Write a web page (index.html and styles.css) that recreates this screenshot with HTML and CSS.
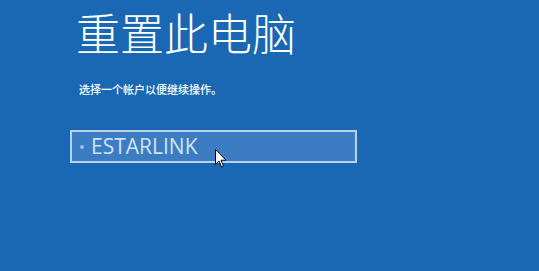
FILE: index.html
```html
<!DOCTYPE html>
<html lang="zh-CN">
<head>
<meta charset="utf-8">
<title>重置此电脑</title>
<link rel="stylesheet" href="styles.css">
</head>
<body>
<main class="screen">
  <h1 class="title">重置此电脑</h1>
  <p class="subtitle">选择一个帐户以便继续操作。</p>
  <div class="account">
    <span class="dot"></span>
    <span class="name">ESTARLINK</span>
    <svg class="cursor" width="12" height="19" viewBox="0 0 12 19">
      <path d="M0.5 0.5 L0.5 15.5 L4 12 L6.5 18 L8.5 17 L6 11.2 L11 11.2 Z" fill="#fff" stroke="#000" stroke-width="1"/>
    </svg>
  </div>
</main>
</body>
</html>
```
FILE: styles.css
```css
html, body {
  margin: 0;
  padding: 0;
  background: #1a68b3;
}
.screen {
  width: 539px;
  height: 271px;
  box-sizing: border-box;
  padding: 0 0 0 70px;
  color: #fff;
  font-family: "Noto Sans CJK SC", "Noto Sans", sans-serif;
  overflow: hidden;
}
.title {
  margin: 0 0 0 6px;
  font-size: 44px;
  font-weight: 300;
  line-height: 64px;
  letter-spacing: 0;
}
.subtitle {
  margin: 17px 0 0 9px;
  font-size: 11px;
  line-height: 16px;
  font-weight: 500;
}
.account {
  position: relative;
  box-sizing: border-box;
  margin-top: 33px;
  width: 287px;
  height: 33px;
  border: 2px solid #b9d3ee;
  background: #3b7cc3;
  display: flex;
  align-items: center;
  padding-left: 8px;
  gap: 7px;
}
.dot {
  width: 4px;
  height: 4px;
  border-radius: 50%;
  background: #8fc0ee;
}
.name {
  font-family: "Open Sans", "Noto Sans", sans-serif;
  font-size: 21px;
  color: #cfe3f8;
  line-height: 29px;
}
.cursor {
  position: absolute;
  left: 143px;
  top: 17px;
}
```
